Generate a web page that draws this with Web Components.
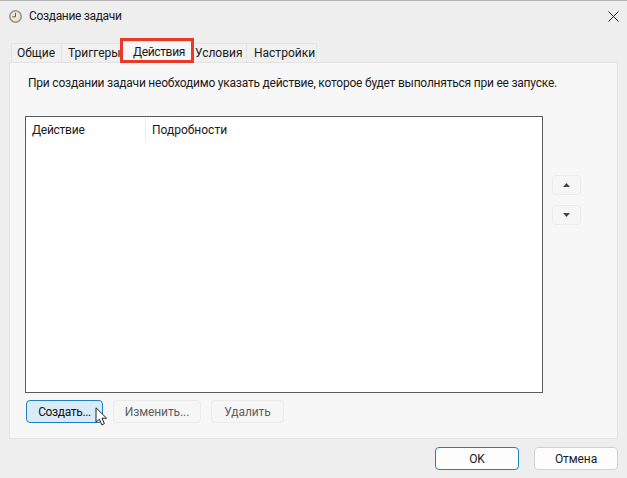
<!DOCTYPE html>
<html lang="ru">
<head>
<meta charset="utf-8">
<title>Создание задачи</title>
<style>
    html, body { margin: 0; height: 100%; }
    body { font-family: Roboto, "Noto Sans", sans-serif; font-size: 12px; color: #1a1a1a; background: #eeeeee; }
</style>
</head>
<body>
<task-dialog></task-dialog>
<script>
class WinButton extends HTMLElement {
    constructor() {
        super();
        this.attachShadow({mode: 'open'}).innerHTML =
            `<style>
                :host {
                    display: flex;
                    align-items: center;
                    justify-content: center;
                    box-sizing: border-box;
                    height: 23px;
                    border: 1px solid #d2d2d2;
                    border-radius: 4px;
                    background: #fdfdfd;
                    color: #1a1a1a;
                    letter-spacing: -.1px;
                }
                :host([disabled]) { background: #f6f6f6; border-color: #ebebeb; color: #5f5f5f; }
                :host([hot]) { background: #d9ebf8; border-color: #1f7fc0; color: #111; letter-spacing: -.35px; }
                :host([primary]) { border-color: #1f7fc0; }
            </style>
            <slot></slot>`;
    }
}

class TabItem extends HTMLElement {
    constructor() {
        super();
        this.attachShadow({mode: 'open'}).innerHTML =
            `<style>
                :host {
                    display: flex;
                    align-items: center;
                    box-sizing: border-box;
                    height: 19px;
                    background: #f0f0f0;
                    border: 1px solid #e4e4e4;
                    border-bottom: 0;
                    margin-left: -1px;
                    white-space: nowrap;
                }
                :host([selected]) {
                    height: 21px;
                    margin-top: -2px;
                    background: #f7f7f7;
                    position: relative;
                    z-index: 1;
                    letter-spacing: -.35px;
                }
            </style>
            <slot></slot>`;
    }
}

class TabStrip extends HTMLElement {
    constructor() {
        super();
        this.attachShadow({mode: 'open'}).innerHTML =
            `<style>
                :host { display: flex; align-items: flex-start; padding-left: 3px; height: 19px; position: relative; }
                .mark {
                    position: absolute;
                    left: 111px;
                    top: -5px;
                    width: 74px;
                    height: 25px;
                    box-sizing: border-box;
                    border: 3px solid #e8392a;
                    z-index: 2;
                }
            </style>
            <tab-item style="width:51px;padding-left:5px">Общие</tab-item>
            <tab-item style="width:60px;padding-left:6px">Триггеры</tab-item>
            <tab-item selected style="width:74px;padding-left:12px">Действия</tab-item>
            <tab-item style="width:54px;padding-left:1px">Условия</tab-item>
            <tab-item style="width:71px;padding-left:7px">Настройки</tab-item>
            <div class="mark"></div>`;
    }
}

class TitleBar extends HTMLElement {
    constructor() {
        super();
        this.attachShadow({mode: 'open'}).innerHTML =
            `<style>
                :host {
                    display: flex;
                    align-items: center;
                    box-sizing: border-box;
                    height: 31px;
                    padding: 0 8px 0 9px;
                    gap: 7px;
                    border-top: 1px solid #b4b4b4;
                }
                svg { flex: none; display: block; }
                .clock { margin-top: 1px; }
                .caption { flex: 1; letter-spacing: -.33px; }
            </style>
            <svg class="clock" width="13" height="13" viewBox="0 0 13 13">
                <circle cx="6.5" cy="6.5" r="5.7" fill="#f1e6cf" stroke="#94948e" stroke-width="1.6"/>
                <path d="M6.5 2.8V6.8H3.4" fill="none" stroke="#6b5a45" stroke-width="1"/>
            </svg>
            <span class="caption">Создание задачи</span>
            <svg width="11" height="11" viewBox="0 0 11 11">
                <path d="M.5 .5L10.5 10.5M10.5 .5L.5 10.5" fill="none" stroke="#222" stroke-width="1"/>
            </svg>`;
    }
}

class ActionList extends HTMLElement {
    constructor() {
        super();
        this.attachShadow({mode: 'open'}).innerHTML =
            `<style>
                :host {
                    display: block;
                    box-sizing: border-box;
                    width: 518px;
                    height: 277px;
                    background: #fff;
                    border: 1px solid #5c5c5c;
                }
                .head { display: grid; grid-template-columns: 120px 1fr; height: 25px; align-items: center; }
                .head span { padding-left: 6px; height: 100%; display: flex; align-items: center; }
                .head span:first-child { border-right: 1px solid #ececec; box-sizing: border-box; letter-spacing: -.25px; }
            </style>
            <div class="head"><span>Действие</span><span>Подробности</span></div>`;
    }
}

class MouseCursor extends HTMLElement {
    constructor() {
        super();
        this.attachShadow({mode: 'open'}).innerHTML =
            `<style>
                :host { position: absolute; left: 95px; top: 407px; width: 13px; height: 19px; z-index: 3; }
                svg { display: block; }
            </style>
            <svg width="13" height="19" viewBox="0 0 13 19">
                <path d="M1 .8V15.2L4.4 12.2L6.8 17.8L9.4 16.6L7 11.2H11.6Z" fill="#fff" stroke="#222" stroke-width="1" stroke-linejoin="round"/>
            </svg>`;
    }
}

class TaskDialog extends HTMLElement {
    constructor() {
        super();
        this.attachShadow({mode: 'open'}).innerHTML =
            `<style>
                :host { display: block; position: relative; width: 627px; height: 478px; overflow: hidden; background: #eeeeee; }
                .body { padding: 12px 9px 0 9px; }
                .panel {
                    box-sizing: border-box;
                    width: 609px;
                    height: 377px;
                    background: #f7f7f7;
                    border: 1px solid #e2e2e2;
                    padding: 11px 15px 0 15px;
                }
                .hint { height: 18px; line-height: 18px; margin-left: 3px; white-space: nowrap; letter-spacing: -.22px; }
                .list-row { display: flex; margin-top: 24px; }
                .arrows { display: flex; flex-direction: column; gap: 10px; margin: 59px 0 0 9px; }
                .arrows win-button { width: 29px; height: 20px; }
                .commands { display: flex; gap: 10px; margin: 7px 0 0 1px; }
                .footer { display: flex; justify-content: flex-end; gap: 15px; padding: 8px 0 0 0; }
                .footer win-button { width: 84px; }
                svg { display: block; }
            </style>
            <title-bar></title-bar>
            <div class="body">
                <tab-strip></tab-strip>
                <div class="panel">
                    <div class="hint">При создании задачи необходимо указать действие, которое будет выполняться при ее запуске.</div>
                    <div class="list-row">
                        <action-list></action-list>
                        <div class="arrows">
                            <win-button disabled><svg width="7" height="4" viewBox="0 0 7 4"><path d="M3.5 0L7 4H0Z" fill="#444"/></svg></win-button>
                            <win-button disabled><svg width="7" height="4" viewBox="0 0 7 4"><path d="M0 0H7L3.5 4Z" fill="#444"/></svg></win-button>
                        </div>
                    </div>
                    <div class="commands">
                        <win-button hot style="width:77px">Создать...</win-button>
                        <win-button disabled style="width:88px">Изменить...</win-button>
                        <win-button disabled style="width:73px">Удалить</win-button>
                    </div>
                </div>
                <div class="footer">
                    <win-button primary>OK</win-button>
                    <win-button>Отмена</win-button>
                </div>
            </div>
            <mouse-cursor></mouse-cursor>`;
    }
}

customElements.define('win-button', WinButton);
customElements.define('tab-item', TabItem);
customElements.define('tab-strip', TabStrip);
customElements.define('title-bar', TitleBar);
customElements.define('action-list', ActionList);
customElements.define('mouse-cursor', MouseCursor);
customElements.define('task-dialog', TaskDialog);
</script>
</body>
</html>
